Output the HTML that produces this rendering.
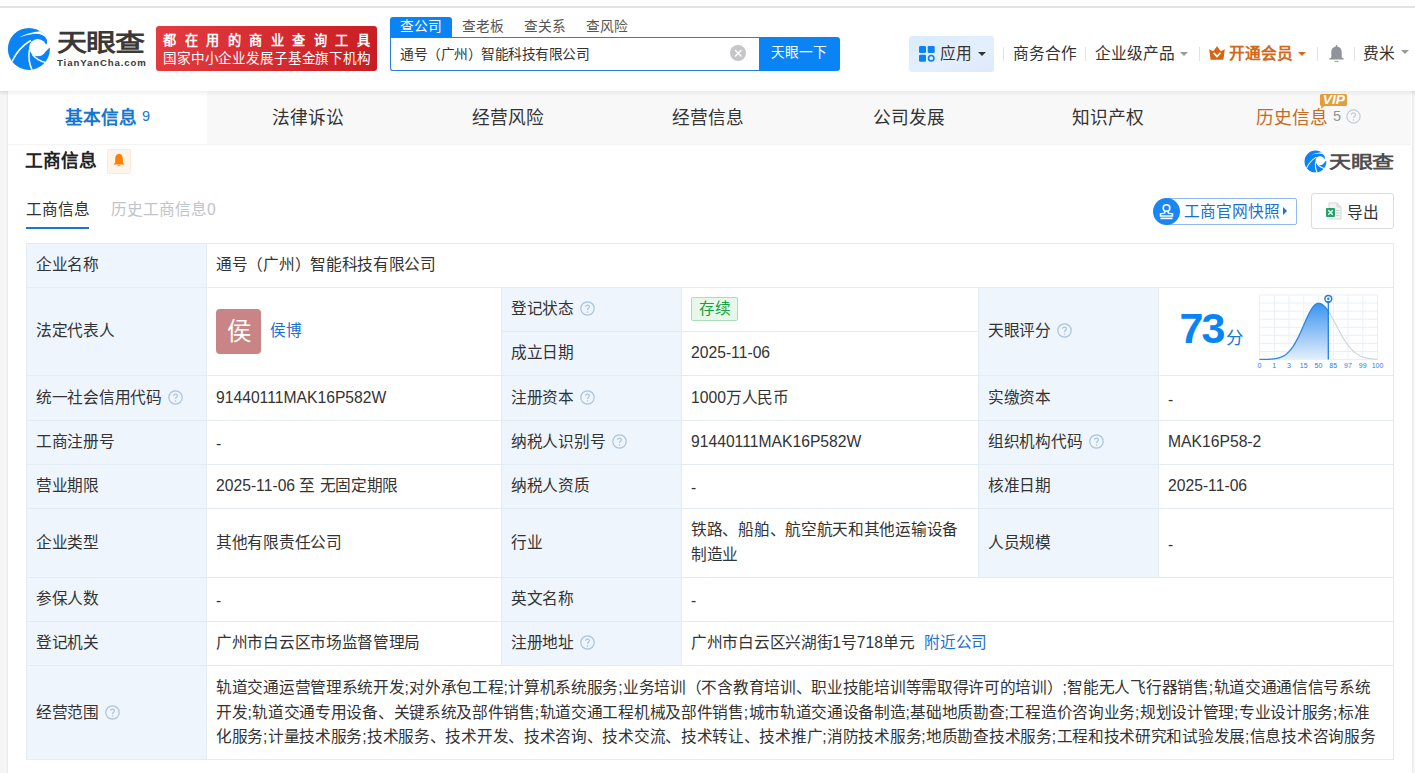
<!DOCTYPE html>
<html lang="zh-CN">
<head>
<meta charset="utf-8">
<style>
*{box-sizing:border-box;margin:0;padding:0}
html,body{width:1415px;height:773px;overflow:hidden}
body{position:relative;background:#f5f5f5;font-family:"Liberation Sans",sans-serif;color:#333}
.abs{position:absolute}
.nw{white-space:nowrap}
.topstrip{left:0;top:0;width:1415px;height:6px;background:#fff}
.topline{left:0;top:6px;width:1415px;height:2px;background:#e6e6e6}
.header{left:0;top:8px;width:1415px;height:83px;background:#fff;box-shadow:0 1px 4px rgba(0,0,0,.07);z-index:2}
.hz{z-index:3}
.stab{top:17px;height:20px;font-size:13.75px;line-height:20px;color:#555}
.nav{top:45px;font-size:15.7px;line-height:18px;color:#333}
.sep{top:47px;width:1px;height:14px;background:#e3e3e3}
.tab{top:107px;font-size:17.7px;line-height:22px;color:#333}
.td{font-size:15.7px;line-height:22px;color:#333;letter-spacing:-0.3px}
i.a{font-style:normal;letter-spacing:0}
.caret{width:0;height:0;border-left:4px solid transparent;border-right:4px solid transparent;border-top:4.5px solid #999}
</style>
</head>
<body>
<div class="abs topstrip"></div>
<div class="abs topline"></div>
<div class="abs header"></div>

<!-- ===== HEADER ===== -->
<div class="abs hz" style="left:0;top:0;width:1415px;height:91px">
  <svg class="abs" style="left:5px;top:25px" width="50" height="48" viewBox="0 0 50 48">
    <circle cx="23.9" cy="23.9" r="21" fill="#0a84f5"/>
    <path d="M14 12.4 Q24 7 35.2 6.3 A21 21 0 0 1 45.6 21.2 L41.3 19.6 C43.8 15.5 41 8.8 30.5 8.7 Q22 9.2 14 12.4 Z" fill="#fff"/>
    <circle cx="32.8" cy="22.6" r="8.7" fill="#fff"/>
    <path d="M32.8 22.6 L41.3 19.4 L47 16 L47 22.6 L44.4 22.7 L40.6 26.6 Z" fill="#fff"/>
    <path d="M7 36.5 Q13.5 22.5 25.8 15.5" stroke="#fff" stroke-width="1.5" fill="none"/>
    <path d="M24.4 24.5 Q22.6 36 27.3 45.5" stroke="#fff" stroke-width="1.5" fill="none"/>
    <path d="M27.2 29.2 Q32.5 35.6 40.5 37.6" stroke="#fff" stroke-width="1.5" fill="none"/>
  </svg>
  <div class="abs nw" style="left:57px;top:29px;font-size:30px;line-height:36px;font-weight:700;color:#3b3838;letter-spacing:-1px;transform:scaleY(0.8);transform-origin:0 0">天眼查</div>
  <div class="abs nw" style="left:57px;top:57px;font-size:9.6px;line-height:11px;font-weight:700;color:#3b3838;letter-spacing:0.9px">TianYanCha.com</div>

  <div class="abs" style="left:156px;top:26px;width:221px;height:45px;border-radius:3px;background:linear-gradient(100deg,#e33b40,#c81d23)"></div>
  <div class="abs nw" style="left:163px;top:32px;font-size:13.2px;line-height:18px;color:#fff;font-weight:700;letter-spacing:8.55px">都在用的商业查询工具</div>
  <div class="abs nw" style="left:163px;top:50px;font-size:13.6px;line-height:18px;color:#fff;letter-spacing:-0.15px">国家中小企业发展子基金旗下机构</div>

  <!-- search -->
  <div class="abs" style="left:390px;top:17px;width:62px;height:21px;background:#0a84f5;border-radius:3px 3px 0 0"></div>
  <div class="abs stab nw" style="left:400px;color:#fff">查公司</div>
  <div class="abs stab nw" style="left:462px">查老板</div>
  <div class="abs stab nw" style="left:524px">查关系</div>
  <div class="abs stab nw" style="left:586px">查风险</div>
  <div class="abs" style="left:390px;top:37px;width:372px;height:34px;border:1px solid #2a7fd0;border-right:none;border-radius:0 0 0 3px;background:#fff"></div>
  <div class="abs nw" style="left:400px;top:46px;font-size:13.75px;line-height:18px;color:#333;letter-spacing:-0.5px">通号（广州）智能科技有限公司</div>
  <div class="abs" style="left:729.5px;top:44.5px;width:16.5px;height:16.5px;border-radius:50%;background:#c6c6ca"></div>
  <svg class="abs" style="left:729.5px;top:44.5px" width="16.5" height="16.5" viewBox="0 0 16.5 16.5"><path d="M5 5 L11.5 11.5 M11.5 5 L5 11.5" stroke="#fff" stroke-width="1.3"/></svg>
  <div class="abs" style="left:759px;top:37px;width:81px;height:34px;background:#0a84f5;border-radius:0 3px 3px 0"></div>
  <div class="abs nw" style="left:771px;top:44px;font-size:13.75px;line-height:18px;color:#fff">天眼一下</div>

  <!-- nav right -->
  <div class="abs" style="left:909px;top:36px;width:85px;height:36px;border-radius:3px;background:linear-gradient(160deg,#dbecfe,#e3effd 60%,#dde9f8)"></div>
  <svg class="abs" style="left:919px;top:46px" width="16" height="16" viewBox="0 0 16 16">
    <rect x="0" y="0" width="7" height="7" rx="1.3" fill="#0a84f5"/>
    <rect x="8.7" y="0" width="7" height="7" rx="1.3" fill="#0a84f5"/>
    <rect x="0" y="8.7" width="7" height="7" rx="1.3" fill="#0a84f5"/>
    <circle cx="12.2" cy="12.2" r="2.7" fill="none" stroke="#0a84f5" stroke-width="1.6"/>
  </svg>
  <div class="abs nav nw" style="left:940px">应用</div>
  <div class="abs caret" style="left:978px;top:52px;border-top-color:#333"></div>
  <div class="abs sep" style="left:1003px"></div>
  <div class="abs nav nw" style="left:1013px">商务合作</div>
  <div class="abs sep" style="left:1085px"></div>
  <div class="abs nav nw" style="left:1095px">企业级产品</div>
  <div class="abs caret" style="left:1180px;top:52px"></div>
  <div class="abs sep" style="left:1199px"></div>
  <svg class="abs" style="left:1209px;top:46px" width="16" height="14" viewBox="0 0 16 14">
    <path d="M0.2 3.2 L4.2 5.2 L8 0.2 L11.8 5.2 L15.8 3.2 L14.4 13.8 L1.6 13.8 Z" fill="#d5650e"/>
    <path d="M4.6 6.8 L8 10.4 L11.4 6.8" stroke="#fff" stroke-width="1.7" fill="none"/>
  </svg>
  <div class="abs nav nw" style="left:1229px;font-weight:700;color:#d2691a">开通会员</div>
  <div class="abs caret" style="left:1298px;top:52px;border-top-color:#d2691a"></div>
  <div class="abs sep" style="left:1317px"></div>
  <svg class="abs" style="left:1329px;top:45px" width="15" height="18" viewBox="0 0 15 18">
    <rect x="6.9" y="0" width="1.2" height="2.2" fill="#909399"/>
    <path d="M7.5 1.6 C4.3 1.6 2.3 3.8 2.3 7.5 L2.3 12.6 L0.3 13.4 L0.3 14.6 L14.7 14.6 L14.7 13.4 L12.7 12.6 L12.7 7.5 C12.7 3.8 10.7 1.6 7.5 1.6 Z" fill="#909399"/>
    <rect x="5.5" y="15.9" width="4" height="1.2" fill="#a0a3a8"/>
  </svg>
  <div class="abs sep" style="left:1354px"></div>
  <div class="abs nav nw" style="left:1363px">费米</div>
  <div class="abs caret" style="left:1401px;top:50px"></div>
</div>

<!-- ===== CARD ===== -->
<div class="abs" style="left:8px;top:91px;width:1404px;height:682px;background:#fff;box-shadow:0 0 2px rgba(0,0,0,.13);z-index:1"></div>


<!-- ===== CARD CONTENT ===== -->
<div class="abs" style="left:8px;top:91px;width:1403px;height:54px;background:#f8f8f8;border-bottom:1px solid #f3f3f3;z-index:2"></div>
<div class="abs" style="left:8px;top:91px;width:199px;height:53px;background:#fff;z-index:2"></div>
<div class="abs" style="z-index:3;left:0;top:0;width:1415px;height:773px">
  <div class="abs nw tab" style="left:65px;font-weight:700;color:#1677d2">基本信息<span style="font-size:14.5px;font-weight:400;margin-left:5px;position:relative;top:-3px">9</span></div>
  <div class="abs nw tab" style="left:272px">法律诉讼</div>
  <div class="abs nw tab" style="left:472px">经营风险</div>
  <div class="abs nw tab" style="left:672px">经营信息</div>
  <div class="abs nw tab" style="left:873px">公司发展</div>
  <div class="abs nw tab" style="left:1072px">知识产权</div>
  <div class="abs nw tab" style="left:1256px;color:#c56a1f">历史信息<span style="font-size:14.5px;color:#939393;margin-left:5px;position:relative;top:-3px">5</span></div>
  <svg class="abs" style="left:1346px;top:109px" width="15" height="15" viewBox="0 0 15 15"><circle cx="7.5" cy="7.5" r="6.6" fill="none" stroke="#c3cad2" stroke-width="1.2"/><path d="M5.4 5.8 C5.4 3.2 9.6 3.2 9.6 5.8 C9.6 7.3 7.5 7.3 7.5 9" stroke="#c3cad2" stroke-width="1.2" fill="none"/><circle cx="7.5" cy="11" r="0.8" fill="#c3cad2"/></svg>
  <svg class="abs" style="left:1319px;top:93px" width="29" height="17" viewBox="0 0 29 17">
    <defs><linearGradient id="vg" x1="0" y1="0" x2="1" y2="0"><stop offset="0" stop-color="#e99b2f"/><stop offset="1" stop-color="#dca048"/></linearGradient></defs>
    <path d="M2.5 1 H26.5 Q28 1 28 2.5 V11.5 Q28 13 26.5 13 H5.5 L2 16 L2.2 13 Q1 12.8 1 11.5 V2.5 Q1 1 2.5 1 Z" fill="url(#vg)"/>
    <text x="3.8" y="11.4" font-family="Liberation Sans" font-weight="700" font-style="italic" font-size="12" textLength="22" lengthAdjust="spacingAndGlyphs" fill="#fff">VIP</text>
  </svg>

  <!-- section title -->
  <div class="abs nw" style="left:25px;top:149px;font-size:17.7px;line-height:24px;font-weight:700;color:#222">工商信息</div>
  <div class="abs" style="left:107px;top:149px;width:24px;height:25px;background:#fff4ea;border:1px solid #fbe9da;border-radius:2px"></div>
  <svg class="abs" style="left:112px;top:153px" width="14" height="15" viewBox="0 0 14 15">
    <path d="M7 1 C4.3 1 3.2 3.3 3.2 5.8 L3.2 9.6 L1.6 11.4 L12.4 11.4 L10.8 9.6 L10.8 5.8 C10.8 3.3 9.7 1 7 1 Z" fill="#ff7d00"/>
    <path d="M5.4 12.2 Q7 14.2 8.6 12.2 Z" fill="#ff7d00"/>
  </svg>
  <!-- small logo -->
  <svg class="abs" style="left:1303px;top:149px" width="26" height="25" viewBox="0 0 50 48">
    <circle cx="23.9" cy="23.9" r="21" fill="#0a84f5"/>
    <path d="M14 12.4 Q24 7 35.2 6.3 A21 21 0 0 1 45.6 21.2 L41.3 19.6 C43.8 15.5 41 8.8 30.5 8.7 Q22 9.2 14 12.4 Z" fill="#fff"/>
    <circle cx="32.8" cy="22.6" r="8.7" fill="#fff"/>
    <path d="M32.8 22.6 L41.3 19.4 L47 16 L47 22.6 L44.4 22.7 L40.6 26.6 Z" fill="#fff"/>
    <path d="M7 36.5 Q13.5 22.5 25.8 15.5" stroke="#fff" stroke-width="2" fill="none"/>
    <path d="M24.4 24.5 Q22.6 36 27.3 45.5" stroke="#fff" stroke-width="2" fill="none"/>
    <path d="M27.2 29.2 Q32.5 35.6 40.5 37.6" stroke="#fff" stroke-width="2" fill="none"/>
  </svg>
  <div class="abs nw" style="left:1329px;top:152.4px;font-size:22px;line-height:26px;font-weight:700;color:#4f4f4f;letter-spacing:-0.3px;transform:scaleY(0.8);transform-origin:0 0">天眼查</div>

  <!-- sub tabs -->
  <div class="abs nw" style="left:26px;top:200px;font-size:15.7px;line-height:20px;color:#333">工商信息</div>
  <div class="abs" style="left:26px;top:227px;width:63px;height:2px;background:#1a78d2"></div>
  <div class="abs nw" style="left:111px;top:200px;font-size:15.7px;line-height:20px;color:#bfc3ca">历史工商信息0</div>

  <!-- buttons -->
  <div class="abs" style="left:1164px;top:198px;width:133px;height:27px;border:1px solid #8ebcee;border-radius:2px;background:#fff"></div>
  <div class="abs" style="left:1153px;top:198px;width:27px;height:27px;border-radius:50%;background:#1a86f2"></div>
  <svg class="abs" style="left:1153px;top:198px" width="27" height="27" viewBox="0 0 27 27">
    <circle cx="13.5" cy="10" r="3.3" fill="none" stroke="#fff" stroke-width="1.6"/>
    <path d="M12 13 L11.6 15.2 L7.5 15.8 L7.5 18 L19.5 18 L19.5 15.8 L15.4 15.2 L15 13" fill="none" stroke="#fff" stroke-width="1.5"/>
    <rect x="7.5" y="19.6" width="12" height="1.6" fill="#fff"/>
  </svg>
  <div class="abs nw" style="left:1184px;top:201px;font-size:15.7px;line-height:22px;color:#1a6fcf">工商官网快照</div>
  <div class="abs" style="left:1283px;top:207px;width:0;height:0;border-top:4px solid transparent;border-bottom:4px solid transparent;border-left:4.5px solid #1a6fcf"></div>

  <div class="abs" style="left:1311px;top:193px;width:83px;height:36px;border:1px solid #dcdcdc;border-radius:3px;background:#fff"></div>
  <svg class="abs" style="left:1325px;top:202px" width="17" height="18" viewBox="0 0 17 18">
    <path d="M4 1 H12 L16 5 V17 H4 Z" fill="#f4f4f4" stroke="#d6d6d6" stroke-width="1"/>
    <path d="M12 1 V5 H16" fill="#e6e6e6" stroke="#d6d6d6" stroke-width="1"/>
    <rect x="11" y="8" width="3.5" height="1" fill="#cfcfcf"/><rect x="11" y="10.5" width="3.5" height="1" fill="#cfcfcf"/><rect x="11" y="13" width="3.5" height="1" fill="#cfcfcf"/>
    <rect x="1" y="6" width="9" height="9" rx="1" fill="#21a366"/>
    <path d="M3.3 8.2 L7.7 12.8 M7.7 8.2 L3.3 12.8" stroke="#fff" stroke-width="1.4"/>
  </svg>
  <div class="abs nw" style="left:1347px;top:202.5px;font-size:15.7px;line-height:20px;color:#333">导出</div>
</div>

<div class="abs" style="left:0;top:91px;width:1415px;height:5px;background:linear-gradient(rgba(0,0,0,.055),rgba(0,0,0,0));z-index:5"></div>
<!-- TABLE START -->
<div class="abs" style="z-index:3;left:0;top:0;width:1415px;height:773px"><div class="abs" style="left:26px;top:243px;width:1368px;height:517px;background:#fff"></div>
<div class="abs" style="left:26px;top:243px;width:180px;height:516px;background:#eef5fd"></div>
<div class="abs" style="left:501px;top:287px;width:180px;height:378px;background:#eef5fd"></div>
<div class="abs" style="left:978px;top:287px;width:180px;height:290px;background:#eef5fd"></div>
<div class="abs" style="left:26px;top:243px;width:1368px;height:1px;background:#e3ebf3"></div>
<div class="abs" style="left:26px;top:287px;width:1368px;height:1px;background:#e3ebf3"></div>
<div class="abs" style="left:501px;top:331px;width:478px;height:1px;background:#e3ebf3"></div>
<div class="abs" style="left:26px;top:375px;width:1368px;height:1px;background:#e3ebf3"></div>
<div class="abs" style="left:26px;top:420px;width:1368px;height:1px;background:#e3ebf3"></div>
<div class="abs" style="left:26px;top:464px;width:1368px;height:1px;background:#e3ebf3"></div>
<div class="abs" style="left:26px;top:508px;width:1368px;height:1px;background:#e3ebf3"></div>
<div class="abs" style="left:26px;top:577px;width:1368px;height:1px;background:#e3ebf3"></div>
<div class="abs" style="left:26px;top:621px;width:1368px;height:1px;background:#e3ebf3"></div>
<div class="abs" style="left:26px;top:665px;width:1368px;height:1px;background:#e3ebf3"></div>
<div class="abs" style="left:26px;top:759px;width:1368px;height:1px;background:#e3ebf3"></div>
<div class="abs" style="left:26px;top:243px;width:1px;height:517px;background:#e3ebf3"></div>
<div class="abs" style="left:1393px;top:243px;width:1px;height:517px;background:#e3ebf3"></div>
<div class="abs" style="left:206px;top:243px;width:1px;height:517px;background:#e3ebf3"></div>
<div class="abs" style="left:501px;top:287px;width:1px;height:379px;background:#e3ebf3"></div>
<div class="abs" style="left:681px;top:287px;width:1px;height:379px;background:#e3ebf3"></div>
<div class="abs" style="left:978px;top:287px;width:1px;height:291px;background:#e3ebf3"></div>
<div class="abs" style="left:1158px;top:287px;width:1px;height:291px;background:#e3ebf3"></div>
<div class="abs nw td" style="left:36px;top:254.0px;">企业名称</div>
<div class="abs nw td" style="left:216px;top:254.0px;">通号（广州）智能科技有限公司</div>
<div class="abs nw td" style="left:36px;top:320.0px;">法定代表人</div>
<div class="abs" style="left:216px;top:309px;width:45px;height:45px;border-radius:4px;background:#c98585;color:#fff;font-size:24.5px;line-height:45px;text-align:center">侯</div>
<div class="abs nw td" style="left:270px;top:320.0px;color:#1a6fcf">侯博</div>
<div class="abs nw td" style="left:511px;top:298.0px;">登记状态</div>
<svg class="abs" style="left:580px;top:300.5px" width="15" height="15" viewBox="0 0 15 15"><circle cx="7.5" cy="7.5" r="6.7" fill="none" stroke="#a9c3df" stroke-width="1.2"/><path d="M5.6 5.8 C5.6 3.6 9.4 3.6 9.4 5.8 C9.4 7.3 7.5 7.2 7.5 9" stroke="#a9c3df" stroke-width="1.15" fill="none"/><circle cx="7.5" cy="10.9" r="0.75" fill="#a9c3df"/></svg>
<div class="abs nw" style="left:691px;top:297px;width:47px;height:24px;border:1px solid #a9dfb6;background:#e7f8eb;border-radius:2px;color:#18a03c;font-size:15.7px;line-height:22px;text-align:center">存续</div>
<div class="abs nw td" style="left:511px;top:342.0px;">成立日期</div>
<div class="abs nw td" style="left:691px;top:342.0px;"><i class="a">2025-11-06</i></div>
<div class="abs nw td" style="left:988px;top:320.0px;">天眼评分</div>
<svg class="abs" style="left:1057px;top:322.5px" width="15" height="15" viewBox="0 0 15 15"><circle cx="7.5" cy="7.5" r="6.7" fill="none" stroke="#a9c3df" stroke-width="1.2"/><path d="M5.6 5.8 C5.6 3.6 9.4 3.6 9.4 5.8 C9.4 7.3 7.5 7.2 7.5 9" stroke="#a9c3df" stroke-width="1.15" fill="none"/><circle cx="7.5" cy="10.9" r="0.75" fill="#a9c3df"/></svg>
<div class="abs nw td" style="left:36px;top:386.5px;">统一社会信用代码</div>
<svg class="abs" style="left:168px;top:389.5px" width="15" height="15" viewBox="0 0 15 15"><circle cx="7.5" cy="7.5" r="6.7" fill="none" stroke="#a9c3df" stroke-width="1.2"/><path d="M5.6 5.8 C5.6 3.6 9.4 3.6 9.4 5.8 C9.4 7.3 7.5 7.2 7.5 9" stroke="#a9c3df" stroke-width="1.15" fill="none"/><circle cx="7.5" cy="10.9" r="0.75" fill="#a9c3df"/></svg>
<div class="abs nw td" style="left:216px;top:386.5px;"><i class="a">91440111MAK16P582W</i></div>
<div class="abs nw td" style="left:511px;top:386.5px;">注册资本</div>
<svg class="abs" style="left:580px;top:389.5px" width="15" height="15" viewBox="0 0 15 15"><circle cx="7.5" cy="7.5" r="6.7" fill="none" stroke="#a9c3df" stroke-width="1.2"/><path d="M5.6 5.8 C5.6 3.6 9.4 3.6 9.4 5.8 C9.4 7.3 7.5 7.2 7.5 9" stroke="#a9c3df" stroke-width="1.15" fill="none"/><circle cx="7.5" cy="10.9" r="0.75" fill="#a9c3df"/></svg>
<div class="abs nw td" style="left:691px;top:386.5px;"><i class="a">1000</i>万人民币</div>
<div class="abs nw td" style="left:988px;top:386.5px;">实缴资本</div>
<div class="abs nw td" style="left:1168px;top:386.5px;transform:translateY(1.5px);"><i class="a">-</i></div>
<div class="abs nw td" style="left:36px;top:431.0px;">工商注册号</div>
<div class="abs nw td" style="left:216px;top:431.0px;transform:translateY(1.5px);"><i class="a">-</i></div>
<div class="abs nw td" style="left:511px;top:431.0px;">纳税人识别号</div>
<svg class="abs" style="left:612px;top:433.5px" width="15" height="15" viewBox="0 0 15 15"><circle cx="7.5" cy="7.5" r="6.7" fill="none" stroke="#a9c3df" stroke-width="1.2"/><path d="M5.6 5.8 C5.6 3.6 9.4 3.6 9.4 5.8 C9.4 7.3 7.5 7.2 7.5 9" stroke="#a9c3df" stroke-width="1.15" fill="none"/><circle cx="7.5" cy="10.9" r="0.75" fill="#a9c3df"/></svg>
<div class="abs nw td" style="left:691px;top:431.0px;"><i class="a">91440111MAK16P582W</i></div>
<div class="abs nw td" style="left:988px;top:431.0px;">组织机构代码</div>
<svg class="abs" style="left:1089px;top:433.5px" width="15" height="15" viewBox="0 0 15 15"><circle cx="7.5" cy="7.5" r="6.7" fill="none" stroke="#a9c3df" stroke-width="1.2"/><path d="M5.6 5.8 C5.6 3.6 9.4 3.6 9.4 5.8 C9.4 7.3 7.5 7.2 7.5 9" stroke="#a9c3df" stroke-width="1.15" fill="none"/><circle cx="7.5" cy="10.9" r="0.75" fill="#a9c3df"/></svg>
<div class="abs nw td" style="left:1168px;top:431.0px;"><i class="a">MAK16P58-2</i></div>
<div class="abs nw td" style="left:36px;top:475.0px;">营业期限</div>
<div class="abs nw td" style="left:216px;top:475.0px;"><i class="a">2025-11-06 </i>至<i class="a"> </i>无固定期限</div>
<div class="abs nw td" style="left:511px;top:475.0px;">纳税人资质</div>
<div class="abs nw td" style="left:691px;top:475.0px;transform:translateY(1.5px);"><i class="a">-</i></div>
<div class="abs nw td" style="left:988px;top:475.0px;">核准日期</div>
<div class="abs nw td" style="left:1168px;top:475.0px;"><i class="a">2025-11-06</i></div>
<div class="abs nw td" style="left:36px;top:531.5px;">企业类型</div>
<div class="abs nw td" style="left:216px;top:531.5px;">其他有限责任公司</div>
<div class="abs nw td" style="left:511px;top:531.5px;">行业</div>
<div class="abs nw td" style="left:691px;top:518px;line-height:24.6px">铁路、船舶、航空航天和其他运输设备<br>制造业</div>
<div class="abs nw td" style="left:988px;top:531.5px;">人员规模</div>
<div class="abs nw td" style="left:1168px;top:531.5px;transform:translateY(1.5px);"><i class="a">-</i></div>
<div class="abs nw td" style="left:36px;top:588.0px;">参保人数</div>
<div class="abs nw td" style="left:216px;top:588.0px;transform:translateY(1.5px);"><i class="a">-</i></div>
<div class="abs nw td" style="left:511px;top:588.0px;">英文名称</div>
<div class="abs nw td" style="left:691px;top:588.0px;transform:translateY(1.5px);"><i class="a">-</i></div>
<div class="abs nw td" style="left:36px;top:632.0px;">登记机关</div>
<div class="abs nw td" style="left:216px;top:632.0px;">广州市白云区市场监督管理局</div>
<div class="abs nw td" style="left:511px;top:632.0px;">注册地址</div>
<svg class="abs" style="left:580px;top:634.5px" width="15" height="15" viewBox="0 0 15 15"><circle cx="7.5" cy="7.5" r="6.7" fill="none" stroke="#a9c3df" stroke-width="1.2"/><path d="M5.6 5.8 C5.6 3.6 9.4 3.6 9.4 5.8 C9.4 7.3 7.5 7.2 7.5 9" stroke="#a9c3df" stroke-width="1.15" fill="none"/><circle cx="7.5" cy="10.9" r="0.75" fill="#a9c3df"/></svg>
<div class="abs nw td" style="left:691px;top:632.0px;">广州市白云区兴湖街<i class="a">1</i>号<i class="a">718</i>单元<span style="color:#1a6fcf;margin-left:10px">附近公司</span></div>
<div class="abs nw td" style="left:36px;top:702.0px;">经营范围</div>
<svg class="abs" style="left:105px;top:704.5px" width="15" height="15" viewBox="0 0 15 15"><circle cx="7.5" cy="7.5" r="6.7" fill="none" stroke="#a9c3df" stroke-width="1.2"/><path d="M5.6 5.8 C5.6 3.6 9.4 3.6 9.4 5.8 C9.4 7.3 7.5 7.2 7.5 9" stroke="#a9c3df" stroke-width="1.15" fill="none"/><circle cx="7.5" cy="10.9" r="0.75" fill="#a9c3df"/></svg>
<div class="abs nw td" style="left:216px;top:676px;line-height:24.6px">轨道交通运营管理系统开发<i class="a" style="letter-spacing:0.45px">;</i>对外承包工程<i class="a" style="letter-spacing:0.45px">;</i>计算机系统服务<i class="a" style="letter-spacing:0.45px">;</i>业务培训（不含教育培训、职业技能培训等需取得许可的培训）<i class="a" style="letter-spacing:0.45px">;</i>智能无人飞行器销售<i class="a" style="letter-spacing:0.45px">;</i>轨道交通通信信号系统<br>开发<i class="a" style="letter-spacing:0.45px">;</i>轨道交通专用设备、关键系统及部件销售<i class="a" style="letter-spacing:0.45px">;</i>轨道交通工程机械及部件销售<i class="a" style="letter-spacing:0.45px">;</i>城市轨道交通设备制造<i class="a" style="letter-spacing:0.45px">;</i>基础地质勘查<i class="a" style="letter-spacing:0.45px">;</i>工程造价咨询业务<i class="a" style="letter-spacing:0.45px">;</i>规划设计管理<i class="a" style="letter-spacing:0.45px">;</i>专业设计服务<i class="a" style="letter-spacing:0.45px">;</i>标准<br>化服务<i class="a" style="letter-spacing:0.45px">;</i>计量技术服务<i class="a" style="letter-spacing:0.45px">;</i>技术服务、技术开发、技术咨询、技术交流、技术转让、技术推广<i class="a" style="letter-spacing:0.45px">;</i>消防技术服务<i class="a" style="letter-spacing:0.45px">;</i>地质勘查技术服务<i class="a" style="letter-spacing:0.45px">;</i>工程和技术研究和试验发展<i class="a" style="letter-spacing:0.45px">;</i>信息技术咨询服务</div>
<div class="abs nw" style="left:1179.5px;top:304px;font-size:43px;line-height:48px;font-weight:700;color:#0a84f5;letter-spacing:-2px">73</div>
<div class="abs nw" style="left:1226px;top:327px;font-size:17.5px;line-height:22px;color:#1a78d2">分</div>
<svg class="abs" style="left:1255px;top:290px" width="135" height="82" viewBox="1255 290 135 82"><defs><linearGradient id="cg" x1="0" y1="0" x2="0" y2="1"><stop offset="0" stop-color="#3b93ef"/><stop offset="1" stop-color="#e3effc"/></linearGradient></defs><line x1="1259.50" y1="295" x2="1259.50" y2="359.5" stroke="#e9f0f8" stroke-width="1"/><line x1="1259.5" y1="295.00" x2="1377.5" y2="295.00" stroke="#e9f0f8" stroke-width="1"/><line x1="1274.25" y1="295" x2="1274.25" y2="359.5" stroke="#e9f0f8" stroke-width="1"/><line x1="1259.5" y1="303.06" x2="1377.5" y2="303.06" stroke="#e9f0f8" stroke-width="1"/><line x1="1289.00" y1="295" x2="1289.00" y2="359.5" stroke="#e9f0f8" stroke-width="1"/><line x1="1259.5" y1="311.12" x2="1377.5" y2="311.12" stroke="#e9f0f8" stroke-width="1"/><line x1="1303.75" y1="295" x2="1303.75" y2="359.5" stroke="#e9f0f8" stroke-width="1"/><line x1="1259.5" y1="319.19" x2="1377.5" y2="319.19" stroke="#e9f0f8" stroke-width="1"/><line x1="1318.50" y1="295" x2="1318.50" y2="359.5" stroke="#e9f0f8" stroke-width="1"/><line x1="1259.5" y1="327.25" x2="1377.5" y2="327.25" stroke="#e9f0f8" stroke-width="1"/><line x1="1333.25" y1="295" x2="1333.25" y2="359.5" stroke="#e9f0f8" stroke-width="1"/><line x1="1259.5" y1="335.31" x2="1377.5" y2="335.31" stroke="#e9f0f8" stroke-width="1"/><line x1="1348.00" y1="295" x2="1348.00" y2="359.5" stroke="#e9f0f8" stroke-width="1"/><line x1="1259.5" y1="343.38" x2="1377.5" y2="343.38" stroke="#e9f0f8" stroke-width="1"/><line x1="1362.75" y1="295" x2="1362.75" y2="359.5" stroke="#e9f0f8" stroke-width="1"/><line x1="1259.5" y1="351.44" x2="1377.5" y2="351.44" stroke="#e9f0f8" stroke-width="1"/><line x1="1377.50" y1="295" x2="1377.50" y2="359.5" stroke="#e9f0f8" stroke-width="1"/><line x1="1259.5" y1="359.50" x2="1377.5" y2="359.50" stroke="#e9f0f8" stroke-width="1"/><path d="M1259.50 359.48 L1260.00 359.47 L1260.50 359.47 L1261.00 359.47 L1261.50 359.46 L1262.00 359.46 L1262.50 359.45 L1263.00 359.45 L1263.50 359.44 L1264.00 359.43 L1264.50 359.42 L1265.00 359.41 L1265.50 359.40 L1266.00 359.39 L1266.50 359.37 L1267.00 359.36 L1267.50 359.34 L1268.00 359.32 L1268.50 359.30 L1269.00 359.27 L1269.50 359.25 L1270.00 359.22 L1270.50 359.19 L1271.00 359.15 L1271.50 359.11 L1272.00 359.07 L1272.50 359.02 L1273.00 358.97 L1273.50 358.91 L1274.00 358.85 L1274.50 358.78 L1275.00 358.71 L1275.50 358.63 L1276.00 358.54 L1276.50 358.44 L1277.00 358.34 L1277.50 358.22 L1278.00 358.10 L1278.50 357.97 L1279.00 357.83 L1279.50 357.67 L1280.00 357.50 L1280.50 357.33 L1281.00 357.13 L1281.50 356.93 L1282.00 356.70 L1282.50 356.47 L1283.00 356.21 L1283.50 355.94 L1284.00 355.65 L1284.50 355.34 L1285.00 355.01 L1285.50 354.66 L1286.00 354.29 L1286.50 353.90 L1287.00 353.49 L1287.50 353.05 L1288.00 352.58 L1288.50 352.10 L1289.00 351.58 L1289.50 351.04 L1290.00 350.48 L1290.50 349.89 L1291.00 349.27 L1291.50 348.62 L1292.00 347.94 L1292.50 347.24 L1293.00 346.51 L1293.50 345.75 L1294.00 344.96 L1294.50 344.14 L1295.00 343.30 L1295.50 342.43 L1296.00 341.53 L1296.50 340.61 L1297.00 339.66 L1297.50 338.68 L1298.00 337.69 L1298.50 336.67 L1299.00 335.63 L1299.50 334.57 L1300.00 333.50 L1300.50 332.41 L1301.00 331.30 L1301.50 330.19 L1302.00 329.06 L1302.50 327.92 L1303.00 326.78 L1303.50 325.64 L1304.00 324.50 L1304.50 323.36 L1305.00 322.22 L1305.50 321.09 L1306.00 319.97 L1306.50 318.87 L1307.00 317.78 L1307.50 316.71 L1308.00 315.66 L1308.50 314.63 L1309.00 313.64 L1309.50 312.67 L1310.00 311.74 L1310.50 310.84 L1311.00 309.99 L1311.50 309.17 L1312.00 308.40 L1312.50 307.68 L1313.00 307.00 L1313.50 306.38 L1314.00 305.81 L1314.50 305.29 L1315.00 304.83 L1315.50 304.43 L1316.00 304.09 L1316.50 303.80 L1317.00 303.58 L1317.50 303.43 L1318.00 303.33 L1318.50 303.30 L1319.00 303.32 L1319.50 303.39 L1320.00 303.50 L1320.50 303.65 L1321.00 303.85 L1321.50 304.09 L1322.00 304.38 L1322.50 304.70 L1323.00 305.07 L1323.50 305.47 L1324.00 305.92 L1324.50 306.40 L1325.00 306.92 L1325.50 307.48 L1326.00 308.07 L1326.50 308.70 L1327.00 309.36 L1327.50 310.04 L1328.00 310.76 L1328.30 311.20 L1328.3 359.5 L1259.5 359.5 Z" fill="url(#cg)"/><path d="M1259.50 359.48 L1260.00 359.47 L1260.50 359.47 L1261.00 359.47 L1261.50 359.46 L1262.00 359.46 L1262.50 359.45 L1263.00 359.45 L1263.50 359.44 L1264.00 359.43 L1264.50 359.42 L1265.00 359.41 L1265.50 359.40 L1266.00 359.39 L1266.50 359.37 L1267.00 359.36 L1267.50 359.34 L1268.00 359.32 L1268.50 359.30 L1269.00 359.27 L1269.50 359.25 L1270.00 359.22 L1270.50 359.19 L1271.00 359.15 L1271.50 359.11 L1272.00 359.07 L1272.50 359.02 L1273.00 358.97 L1273.50 358.91 L1274.00 358.85 L1274.50 358.78 L1275.00 358.71 L1275.50 358.63 L1276.00 358.54 L1276.50 358.44 L1277.00 358.34 L1277.50 358.22 L1278.00 358.10 L1278.50 357.97 L1279.00 357.83 L1279.50 357.67 L1280.00 357.50 L1280.50 357.33 L1281.00 357.13 L1281.50 356.93 L1282.00 356.70 L1282.50 356.47 L1283.00 356.21 L1283.50 355.94 L1284.00 355.65 L1284.50 355.34 L1285.00 355.01 L1285.50 354.66 L1286.00 354.29 L1286.50 353.90 L1287.00 353.49 L1287.50 353.05 L1288.00 352.58 L1288.50 352.10 L1289.00 351.58 L1289.50 351.04 L1290.00 350.48 L1290.50 349.89 L1291.00 349.27 L1291.50 348.62 L1292.00 347.94 L1292.50 347.24 L1293.00 346.51 L1293.50 345.75 L1294.00 344.96 L1294.50 344.14 L1295.00 343.30 L1295.50 342.43 L1296.00 341.53 L1296.50 340.61 L1297.00 339.66 L1297.50 338.68 L1298.00 337.69 L1298.50 336.67 L1299.00 335.63 L1299.50 334.57 L1300.00 333.50 L1300.50 332.41 L1301.00 331.30 L1301.50 330.19 L1302.00 329.06 L1302.50 327.92 L1303.00 326.78 L1303.50 325.64 L1304.00 324.50 L1304.50 323.36 L1305.00 322.22 L1305.50 321.09 L1306.00 319.97 L1306.50 318.87 L1307.00 317.78 L1307.50 316.71 L1308.00 315.66 L1308.50 314.63 L1309.00 313.64 L1309.50 312.67 L1310.00 311.74 L1310.50 310.84 L1311.00 309.99 L1311.50 309.17 L1312.00 308.40 L1312.50 307.68 L1313.00 307.00 L1313.50 306.38 L1314.00 305.81 L1314.50 305.29 L1315.00 304.83 L1315.50 304.43 L1316.00 304.09 L1316.50 303.80 L1317.00 303.58 L1317.50 303.43 L1318.00 303.33 L1318.50 303.30 L1319.00 303.32 L1319.50 303.39 L1320.00 303.50 L1320.50 303.65 L1321.00 303.85 L1321.50 304.09 L1322.00 304.38 L1322.50 304.70 L1323.00 305.07 L1323.50 305.47 L1324.00 305.92 L1324.50 306.40 L1325.00 306.92 L1325.50 307.48 L1326.00 308.07 L1326.50 308.70 L1327.00 309.36 L1327.50 310.04 L1328.00 310.76 L1328.30 311.20" fill="none" stroke="#2a86e8" stroke-width="1.3"/><path d="M1328.30 311.20 L1328.50 311.50 L1329.00 312.27 L1329.50 313.07 L1330.00 313.89 L1330.50 314.72 L1331.00 315.58 L1331.50 316.46 L1332.00 317.35 L1332.50 318.25 L1333.00 319.17 L1333.50 320.10 L1334.00 321.03 L1334.50 321.98 L1335.00 322.93 L1335.50 323.88 L1336.00 324.84 L1336.50 325.80 L1337.00 326.75 L1337.50 327.71 L1338.00 328.66 L1338.50 329.61 L1339.00 330.55 L1339.50 331.48 L1340.00 332.40 L1340.50 333.32 L1341.00 334.22 L1341.50 335.11 L1342.00 335.99 L1342.50 336.85 L1343.00 337.71 L1343.50 338.54 L1344.00 339.36 L1344.50 340.16 L1345.00 340.95 L1345.50 341.71 L1346.00 342.46 L1346.50 343.19 L1347.00 343.90 L1347.50 344.59 L1348.00 345.27 L1348.50 345.92 L1349.00 346.55 L1349.50 347.17 L1350.00 347.76 L1350.50 348.33 L1351.00 348.89 L1351.50 349.42 L1352.00 349.94 L1352.50 350.43 L1353.00 350.91 L1353.50 351.37 L1354.00 351.81 L1354.50 352.23 L1355.00 352.63 L1355.50 353.02 L1356.00 353.39 L1356.50 353.74 L1357.00 354.08 L1357.50 354.40 L1358.00 354.71 L1358.50 355.00 L1359.00 355.28 L1359.50 355.54 L1360.00 355.79 L1360.50 356.03 L1361.00 356.25 L1361.50 356.46 L1362.00 356.66 L1362.50 356.85 L1363.00 357.03 L1363.50 357.20 L1364.00 357.36 L1364.50 357.51 L1365.00 357.65 L1365.50 357.78 L1366.00 357.90 L1366.50 358.02 L1367.00 358.13 L1367.50 358.23 L1368.00 358.32 L1368.50 358.41 L1369.00 358.50 L1369.50 358.57 L1370.00 358.64 L1370.50 358.71 L1371.00 358.77 L1371.50 358.83 L1372.00 358.89 L1372.50 358.94 L1373.00 358.98 L1373.50 359.03 L1374.00 359.06 L1374.50 359.10 L1375.00 359.14 L1375.50 359.17 L1376.00 359.20 L1376.50 359.22 L1377.00 359.25 L1377.50 359.27" fill="none" stroke="#c9d3dd" stroke-width="1.1"/><line x1="1328.3" y1="301" x2="1328.3" y2="359.5" stroke="#1f7fe6" stroke-width="1.3"/><circle cx="1328.3" cy="298.8" r="3.4" fill="#fff" stroke="#1f7fe6" stroke-width="1.5"/><circle cx="1328.3" cy="298.8" r="1.2" fill="#1f7fe6"/><path d="M1325.8 301 L1328.3 304 L1330.8 301 Z" fill="#1f7fe6"/><text x="1259.50" y="367.5" text-anchor="middle" font-family="Liberation Sans" font-size="7" fill="#2d7fdc">0</text><text x="1274.25" y="367.5" text-anchor="middle" font-family="Liberation Sans" font-size="7" fill="#2d7fdc">1</text><text x="1289.00" y="367.5" text-anchor="middle" font-family="Liberation Sans" font-size="7" fill="#2d7fdc">3</text><text x="1303.75" y="367.5" text-anchor="middle" font-family="Liberation Sans" font-size="7" fill="#2d7fdc">15</text><text x="1318.50" y="367.5" text-anchor="middle" font-family="Liberation Sans" font-size="7" fill="#2d7fdc">50</text><text x="1333.25" y="367.5" text-anchor="middle" font-family="Liberation Sans" font-size="7" fill="#2d7fdc">85</text><text x="1348.00" y="367.5" text-anchor="middle" font-family="Liberation Sans" font-size="7" fill="#2d7fdc">97</text><text x="1362.75" y="367.5" text-anchor="middle" font-family="Liberation Sans" font-size="7" fill="#2d7fdc">99</text><text x="1377.50" y="367.5" text-anchor="middle" font-family="Liberation Sans" font-size="7" fill="#2d7fdc">100</text></svg></div>
<!-- TABLE END -->
</body>
</html>
